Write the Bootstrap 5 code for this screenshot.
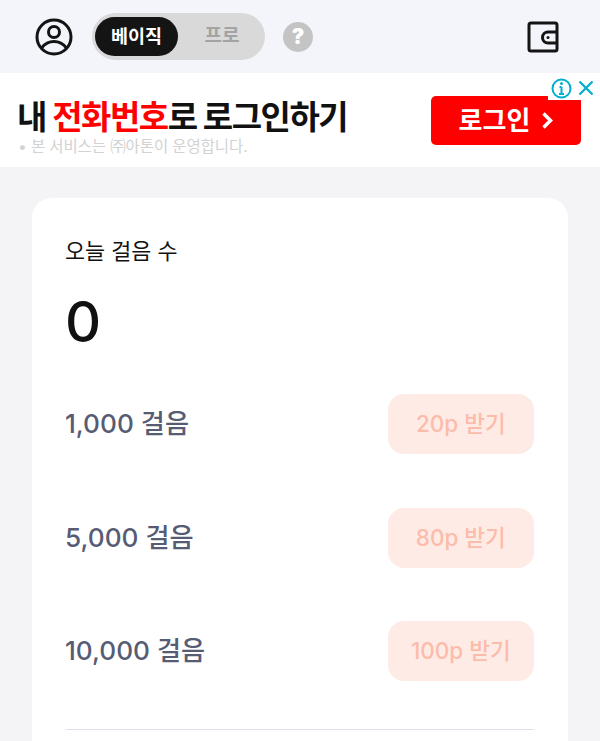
<!DOCTYPE html>
<html lang="ko">
<head>
    <meta charset="UTF-8">
    <title>걸음 수</title>
    <meta name="viewport" content="width=device-width, initial-scale=1">
    <link href="https://cdn.jsdelivr.net/npm/bootstrap@5.3.0/dist/css/bootstrap.min.css" rel="stylesheet">
    <script src="https://cdn.jsdelivr.net/npm/bootstrap@5.3.0/dist/js/bootstrap.bundle.min.js"></script>
    <style>
        html, body { height: 741px; overflow: hidden; }
        body { background: #f4f4f7; font-family: "Inter", "Noto Sans CJK KR", sans-serif; }
        .top-bar { height: 73px; padding: 0 41px 0 35px; background: #f4f5fa; }
        .mode-switch { width: 173px; height: 47px; margin-left: 19px; padding: 4px 3px; border-radius: 24px; background: #d9d9d9; }
        .mode-item { flex: 0 0 83px; font-size: 18.5px; font-weight: 700; color: #a3a3a3; border-radius: 20px; }
        .mode-item.active-mode { background: #141414; color: #fff; }
        .mode-item.plain-mode { flex: 1 1 auto; padding-left: 4px; font-size: 19px; }
        .help-dot { width: 30px; height: 30px; margin-left: 18px; border-radius: 50%; background: #c4c4c4; color: #fff; font-size: 21px; font-weight: 900; line-height: 1; }
        .ad-strip { height: 94px; padding: 0 19px 0 17px; background: #fff; position: relative; }
        .ad-title { margin-top: 26px; font-size: 33px; font-weight: 700; line-height: 36px; letter-spacing: -1.5px; color: #111; white-space: nowrap; }
        .ad-title em { font-style: normal; color: #f00; }
        .ad-note { margin-top: 3px; padding-left: 1px; font-size: 15.5px; line-height: 18px; letter-spacing: -.1px; color: #d2d2d2; white-space: nowrap; }
        .ad-btn { width: 150px; height: 49px; margin-top: 23px; border-radius: 5px; background: #f00; color: #fff; font-size: 26px; font-weight: 700; }
        .ad-marks { position: absolute; top: 0; right: 0; width: 52px; height: 27px; gap: 6.5px; background: #fff; padding: 3px 6px 0 0; }
        .step-card { margin: 31px 32px 0; height: 543px; padding: 33px 34px 0 33px; border-radius: 20px 20px 0 0; background: #fff; }
        .today-label { font-size: 21.8px; line-height: 40px; height: 40px; color: #111; }
        .today-count { margin-top: 15px; font-size: 56px; font-weight: 500; line-height: 72px; height: 72px; color: #111; }
        .step-row { height: 60px; margin-bottom: 53.5px; }
        .step-name { font-size: 26.2px; font-weight: 500; color: #575c75; }
        .claim-btn { width: 146.5px; height: 60px; border: 0; border-radius: 16px; background: #ffebe5; color: #fbbcab; font-size: 22.5px; font-weight: 500; padding: 0; }
        .first-row { margin-top: 36px; }
        .step-rule { height: 1px; margin: -5.5px 0 0 1px; background: #dfe1ea; }
    </style>
</head>
<body>
<div class="top-bar d-flex align-items-center">
    <svg width="38" height="38" viewBox="0 0 38 38" fill="none" stroke="#141414" stroke-width="3">
        <circle cx="19" cy="19" r="17"/>
        <circle cx="19" cy="14" r="5.5"/>
        <path d="M6.5 30c3.500-4.500 8-6.500 12.500-6.500s9 2 12.500 6.500"/>
    </svg>
    <div class="mode-switch d-flex">
        <div class="mode-item active-mode d-flex align-items-center justify-content-center">베이직</div>
        <div class="mode-item plain-mode d-flex align-items-center justify-content-center">프로</div>
    </div>
    <div class="help-dot d-flex align-items-center justify-content-center">?</div>
    <svg class="ms-auto" width="32" height="32" viewBox="0 0 32 32" fill="none" stroke="#141414" stroke-width="3">
        <path d="M4 2h24a2 2 0 0 1 2 2v24a2 2 0 0 1-2 2H4a2 2 0 0 1-2-2V4a2 2 0 0 1 2-2z"/>
        <path d="M30 11h-9a5 5 0 0 0 0 11h9"/>
        <circle cx="21" cy="16.500" r="1.500" fill="#141414" stroke="none"/>
    </svg>
</div>

<div class="ad-strip d-flex justify-content-between">
    <div>
        <div class="ad-title">내 <em>전화번호</em>로 로그인하기</div>
        <div class="ad-note">• 본 서비스는 ㈜아톤이 운영합니다.</div>
    </div>
    <div class="ad-btn d-flex align-items-center justify-content-center gap-2">
        <span>로그인</span>
        <svg class="ms-1" width="11" height="17" viewBox="0 0 11 17" fill="none" stroke="#fff" stroke-width="3.500"><path d="M1.500 1.500l7 7-7 7"/></svg>
    </div>
    <div class="ad-marks d-flex justify-content-end align-items-center">
        <svg width="21" height="21" viewBox="0 0 21 21" fill="none" stroke="#00aecd" stroke-width="2">
            <circle cx="10.500" cy="10.500" r="9"/>
            <path d="M10.500 9v7M8 16h5M8.500 9h2" stroke-width="2"/>
            <circle cx="10.500" cy="5.500" r="1.500" fill="#00aecd" stroke="none"/>
        </svg>
        <svg width="16" height="16" viewBox="0 0 16 16" fill="none" stroke="#00aecd" stroke-width="2.200"><path d="M1.500 1.500l13 13M14.500 1.500l-13 13"/></svg>
    </div>
</div>

<div class="step-card">
    <div class="today-label">오늘 걸음 수</div>
    <div class="today-count">0</div>
    <div class="step-row first-row d-flex justify-content-between align-items-center">
        <span class="step-name">1,000 걸음</span>
        <button class="claim-btn" type="button" disabled>20p 받기</button>
    </div>
    <div class="step-row d-flex justify-content-between align-items-center">
        <span class="step-name">5,000 걸음</span>
        <button class="claim-btn" type="button" disabled>80p 받기</button>
    </div>
    <div class="step-row d-flex justify-content-between align-items-center">
        <span class="step-name">10,000 걸음</span>
        <button class="claim-btn" type="button" disabled>100p 받기</button>
    </div>
    <div class="step-rule"></div>
</div>
</body>
</html>
